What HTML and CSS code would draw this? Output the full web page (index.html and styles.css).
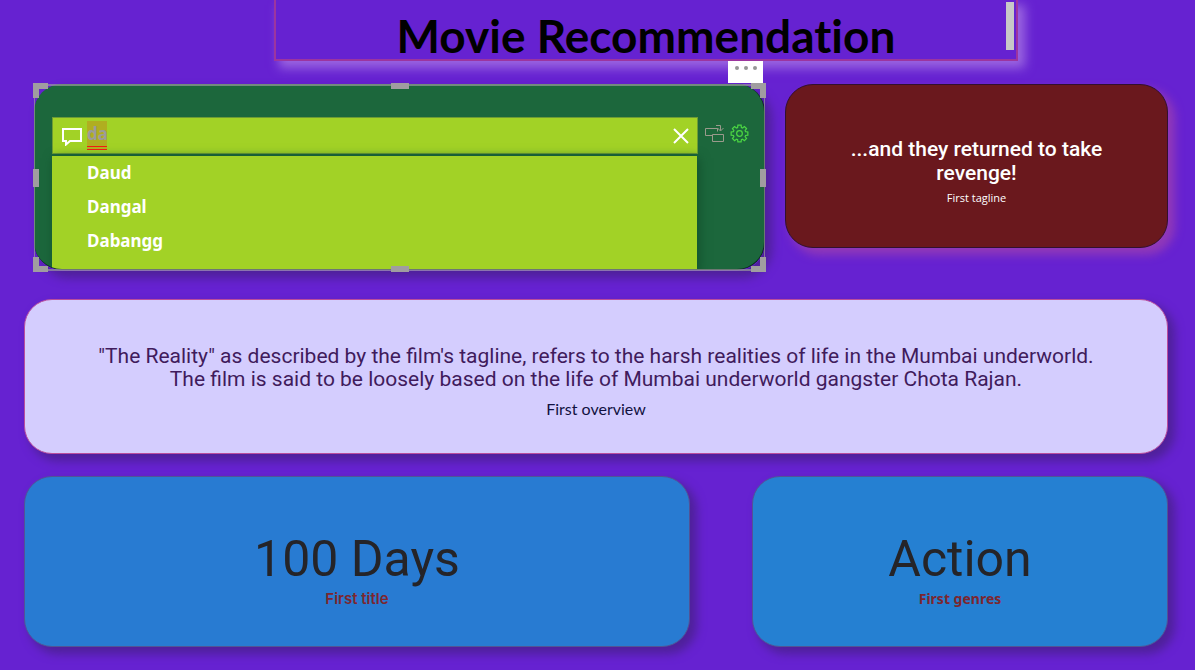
FILE: index.html
```html
<!DOCTYPE html>
<html lang="en">
<head>
<meta charset="utf-8">
<meta name="viewport" content="width=device-width, initial-scale=1">
<title>Movie Recommendation</title>
<link rel="stylesheet" href="styles.css">
</head>
<body>
<header class="banner">
  <h1 class="banner-title">Movie Recommendation</h1>
  <span class="scroll-thumb"></span>
</header>
<main class="report">
  <div class="row row-top">
    <section class="search-visual">
      <button class="more" type="button" aria-label="More options"><i></i><i></i><i></i></button>
      <div class="search-card">
        <div class="search-main">
          <div class="search-box">
            <svg class="bubble" viewBox="0 0 20 18" aria-hidden="true"><path d="M1 1h18v12H8L4 16.500V13H1z"/></svg>
            <label class="query"><input class="query-input" type="text" value="da" aria-label="Search movies"></label>
            <button class="clear" type="button" aria-label="Clear"><svg viewBox="0 0 16 16"><path d="M1 1l14 14M15 1L1 15"/></svg></button>
          </div>
          <ul class="suggestions">
            <li>Daud</li>
            <li>Dangal</li>
            <li>Dabangg</li>
          </ul>
        </div>
        <div class="tools">
          <button class="tool" type="button" aria-label="Convert visual"><svg viewBox="0 0 19 19"><path class="stroke-grey" d="M7 11.500H.5v-7h12v3M7.500 10.500h11v7h-11zM11 1.500h4.500v5M12.500 4l3 3 3-3"/></svg></button>
          <button class="tool" type="button" aria-label="Settings"><svg viewBox="0 0 20 20"><path class="stroke-green" d="M8.300 1.300h3.400l.3 2.400 1.200.5 2-1.500 2.200 2.200-1.500 2 .5 1.200 2.400.3v3.300l-2.400.4-.5 1.200 1.500 1.900-2.200 2.300-2-1.500-1.200.5-.3 2.400H8.300L8 16.500l-1.200-.5-2 1.500-2.200-2.300 1.500-1.900-.5-1.200-2.400-.4V8.400l2.400-.3.500-1.200-1.500-2 2.200-2.200 2 1.500L8 3.700z"/><circle class="stroke-green" cx="10" cy="10" r="3"/></svg></button>
        </div>
      </div>
      <div class="selection">
        <i class="handle corner nw"></i><i class="handle bar n"></i><i class="handle corner ne"></i>
        <i class="handle side w"></i><i class="handle side e"></i>
        <i class="handle corner sw"></i><i class="handle bar s"></i><i class="handle corner se"></i>
      </div>
    </section>
    <section class="card tagline">
      <p class="tagline-value">...and they returned to take revenge!</p>
      <p class="tagline-label">First tagline</p>
    </section>
  </div>
  <section class="card overview">
    <p class="overview-value">"The Reality" as described by the film's tagline, refers to the harsh realities of life in the Mumbai underworld. The film is said to be loosely based on the life of Mumbai underworld gangster Chota Rajan.</p>
    <p class="overview-label">First overview</p>
  </section>
  <div class="row row-bottom">
    <section class="card fact fact-title">
      <p class="fact-value">100 Days</p>
      <p class="fact-label casual">First title</p>
    </section>
    <section class="card fact fact-genre">
      <p class="fact-value">Action</p>
      <p class="fact-label">First genres</p>
    </section>
  </div>
</main>
</body>
</html>
```

FILE: styles.css
```css
* { box-sizing: border-box; }
body { margin: 0; background: #6622d1; font-family: "Open Sans", "Noto Sans", sans-serif; }
p, h1, ul { margin: 0; padding: 0; }
button { border: 0; padding: 0; background: none; }

.banner {
  position: relative;
  margin: 0 177px 0 274px;
  height: 61px;
  padding-top: 8px;
  border: 2px solid #9c359f;
  border-top: 0;
  background: #6622d1;
  box-shadow: 6px 6px 10px 1px #9b66e0;
}
.banner-title {
  font: 700 46px/56px Lato, "Open Sans", sans-serif;
  font-variant-ligatures: none;
  text-align: center;
  color: #000;
}
.scroll-thumb { position: absolute; top: 2px; right: 2px; width: 8px; height: 48px; background: #c8c8c8; }

.report { padding: 23px 27px 24px 24px; }
.row { display: grid; align-items: start; }
.row-top { grid-template-columns: 731fr 383fr; gap: 20px; padding-left: 10px; }
.row-bottom { grid-template-columns: 666fr 416fr; gap: 62px; margin-top: 22px; }

.card {
  display: flex;
  flex-direction: column;
  align-items: center;
  justify-content: center;
  border-radius: 28px;
  text-align: center;
  box-shadow: 6px 6px 10px 1px #4f219a;
}

.search-visual {
  position: relative;
  height: 187px;
  border-radius: 28px;
  box-shadow: 6px 6px 10px 1px #4f219a;
}
.search-card {
  display: flex;
  height: 186px;
  padding: 33px 15px 0 18px;
  overflow: hidden;
  border: 1px solid #0d2a20;
  border-width: 0 1px 1px 0;
  border-radius: 28px;
  background: #1c673c;
}
.search-main { flex: 1; }
.search-box {
  display: flex;
  align-items: center;
  height: 37px;
  padding: 0 8px 0 9px;
  border: 1px solid #6d9b35;
  background: #a2d226;
}
.bubble { width: 20px; height: 18px; fill: none; stroke: #fff; stroke-width: 2; margin-top: 3px; }
.query { flex: 1; padding-left: 5px; display: flex; }
.query-input {
  width: 20px;
  height: 29px;
  padding: 0;
  border: 0;
  border-bottom: 4px double #f01c12;
  outline: 0;
  background: #b0ae20;
  color: #9b9b9b;
  font: 700 17px/24px "Noto Sans", sans-serif;
}
.clear { width: 16px; height: 16px; }
.clear svg { display: block; fill: none; stroke: #fff; stroke-width: 2; }
.suggestions {
  height: 116px;
  margin: 2px 1px 0 0;
  overflow: hidden;
  list-style: none;
  background: #a2d226;
  box-shadow: 2px 2px 10px #12502c;
}
.suggestions li { padding-left: 35px; font: 700 17px/34px "Noto Sans", sans-serif; color: #fff; }
.tools { display: flex; gap: 6px; padding: 7px 0 0 7px; align-items: flex-start; }
.tool { width: 19px; height: 19px; }
.tool svg { display: block; fill: none; }
.stroke-grey { stroke: #9a9a8c; }
.stroke-green { stroke: #4bd543; stroke-width: 1.3; }

.selection { position: absolute; inset: 0; border: 2px solid #9d9d9daa; border-width: 2px 1px; pointer-events: none; }
.handle { position: absolute; border: 0 solid #a09da0; }
.corner { width: 15px; height: 15px; }
.nw { top: -3px; left: -2px; border-width: 6px 0 0 6px; }
.ne { top: -3px; right: -2px; border-width: 6px 6px 0 0; }
.sw { bottom: -3px; left: -2px; border-width: 0 0 6px 6px; }
.se { bottom: -3px; right: -2px; border-width: 0 6px 6px 0; }
.bar { left: calc(50% - 9px); width: 18px; height: 6px; background: #a09da0; }
.n { top: -3px; }
.s { bottom: -3px; }
.side { top: calc(50% - 9px); width: 6px; height: 18px; background: #a09da0; }
.w { left: -2px; }
.e { right: -2px; }
.more {
  position: absolute;
  top: -23px;
  right: 2px;
  display: flex;
  justify-content: center;
  gap: 5px;
  width: 35px;
  height: 22px;
  padding-top: 5px;
  background: #fff;
}
.more i { width: 4px; height: 4px; border-radius: 50%; background: #969696; }

.tagline { min-height: 164px; padding: 12px 60px 0; border: 1px solid #32102e; background: #6a181d; color: #fff; box-shadow: 6px 6px 10px 1px #9139b8; }
.tagline-value { font: 500 21px/24px Roboto, sans-serif; }
.tagline-label { margin-top: 4px; font-size: 11px; line-height: 18px; }

.overview { min-height: 155px; margin-top: 28px; padding: 10px 72px 0; border: 1px solid #bb4e9c; background: #d4cdfe; }
.overview-value { font: 400 21px/23px Roboto, sans-serif; color: #401b5c; }
.overview-label { margin-top: 8px; font: 400 16px/20px Lato, sans-serif; color: #111141; }

.fact { min-height: 171px; padding-top: 18px; border: 1px solid #515396; }
.fact-title { background: #287bd2; }
.fact-genre { background: #2580d2; }
.fact-value { font: 400 50px/56px Roboto, sans-serif; color: #252428; }
.fact-label { font: 700 14px/24px "Noto Sans", sans-serif; color: #7c262f; }
.casual { font: 600 15px/24px Inter, sans-serif; }
```
